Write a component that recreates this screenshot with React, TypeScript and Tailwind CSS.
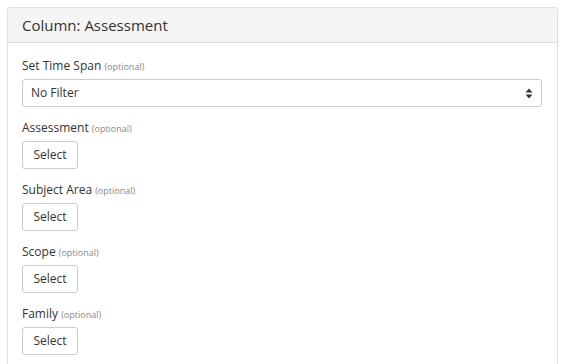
const fields = ["Assessment", "Subject Area", "Scope", "Family"];

function Label({ text }: { text: string }) {
    return (
        <div className="mb-[5px] h-[17px] text-[12px] leading-[17px] text-[#333]">
            {text} <span className="text-[9px] text-[#888]">(optional)</span>
        </div>
    );
}

export default function App() {
    return (
        <div
            className="min-h-[364px] bg-white pt-[7px] pl-[7px]"
            style={{ fontFamily: '"Open Sans", "Liberation Sans", sans-serif' }}
        >
            <div className="w-[551px] rounded-[3px] border border-[#ddd]">
                <div className="flex h-[35px] items-center border-b border-[#ddd] bg-[#f5f5f5] px-[14px] text-[15px] text-[#333]">
                    Column: Assessment
                </div>
                <div className="pt-[14px] pr-[15px] pl-[14px]">
                    <Label text="Set Time Span" />
                    <div className="mb-[12px] flex h-[28px] items-center justify-between rounded-[3px] border border-[#ccc] bg-white pr-[8px] pl-[8px] text-[12px] text-[#333]">
                        <span>No Filter</span>
                        <svg width="8" height="11" viewBox="0 0 8 11">
                            <path d="M4 0.5 L7.5 4.5 H0.5 Z" fill="#333" />
                            <path d="M4 10.5 L7.5 6.5 H0.5 Z" fill="#333" />
                        </svg>
                    </div>
                    {fields.map((f) => (
                        <div key={f} className="mb-[12px]">
                            <Label text={f} />
                            <button className="h-[28px] w-[56px] rounded-[3px] border border-[#ccc] bg-white text-[12px] text-[#333]">
                                Select
                            </button>
                        </div>
                    ))}
                </div>
            </div>
        </div>
    );
}
